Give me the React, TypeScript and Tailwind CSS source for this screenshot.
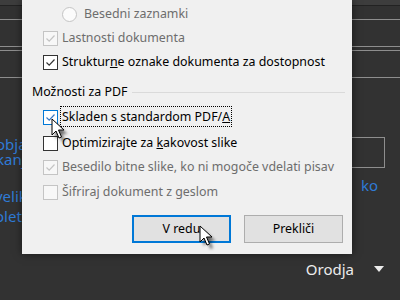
import React from "react";

const font = { fontFamily: '"Segoe UI", "Noto Sans", "Open Sans", sans-serif' };

function Check({ state }: { state: "on" | "off" | "dis-on" | "dis-off" | "hover-on" }) {
  const disabled = state.startsWith("dis");
  const checked = state === "on" || state === "dis-on" || state === "hover-on";
  const border =
    state === "hover-on" ? "border-[#0078d7]" : disabled ? "border-[#c4c4c4]" : "border-[#333333]";
  const bg = disabled ? "bg-[#f7f7f7]" : "bg-white";
  const stroke = state === "hover-on" ? "#3b78c4" : disabled ? "#c4c4c4" : "#333333";
  return (
    <div className={`w-[15px] h-[15px] border ${border} ${bg} flex items-center justify-center shrink-0`}>
      {checked && (
        <svg width="11" height="11" viewBox="0 0 11 11">
          <path d="M1.5 5.5 L4.2 8.2 L9.5 2.5" fill="none" stroke={stroke} strokeWidth="1.2" />
        </svg>
      )}
    </div>
  );
}

function Row({
  state,
  children,
  gray,
  className = "",
}: {
  state: "on" | "off" | "dis-on" | "dis-off" | "hover-on";
  children: React.ReactNode;
  gray?: boolean;
  className?: string;
}) {
  return (
    <div className={`flex items-center h-[24px] pl-[21px] ${className}`}>
      <Check state={state} />
      <div className={`ml-[4px] text-[12.4px] leading-[16px] ${gray ? "text-[#6d6d6d]" : "text-[#000000]"}`}>
        {children}
      </div>
    </div>
  );
}

function Cursor({ className }: { className: string }) {
  return (
    <svg className={className} width="20" height="26" viewBox="0 0 20 26" style={{ overflow: "visible" }}>
      <defs>
        <filter id="sh" x="-50%" y="-50%" width="200%" height="200%">
          <feGaussianBlur stdDeviation="1.6" />
        </filter>
      </defs>
      <path
        d="M3 3 L3 19 L7 15 L10 22 L12.5 21 L9.5 14 L15 14 Z"
        fill="rgba(0,0,0,0.55)"
        filter="url(#sh)"
        transform="translate(1.5,2)"
      />
      <path
        d="M1 1 L1 17 L5 13 L8 20 L10.5 19 L7.5 12 L13 12 Z"
        fill="white"
        stroke="black"
        strokeWidth="1"
        strokeLinejoin="miter"
      />
    </svg>
  );
}

export default function App() {
  return (
    <div className="relative w-[400px] h-[300px] overflow-hidden bg-[#323232]" style={font}>
      {/* background app */}
      <div className="flex flex-col">
        <div className="h-[5px] bg-[#3d3d3d]" />
        <div className="h-[1px] bg-[#222222]" />
        <div className="h-[13px]" />
        <div className="h-[1px] bg-[#8e8e8e]" />
        <div className="h-[26px]" />
        <div className="h-[1px] bg-[#8e8e8e]" />
        <div className="h-[3px]" />
        <div className="h-[1px] bg-[#8e8e8e]" />
        <div className="h-[26px]" />
        <div className="h-[1px] bg-[#8e8e8e]" />
        <div className="h-[59px]" />
        <div className="flex">
          <div className="ml-[-4px] flex flex-col text-[15px] leading-[15px] text-[#2f7bd6]">
            <span>objava</span>
            <span>kanje</span>
          </div>
          <div className="ml-auto mr-[15px] w-[85px] h-[31px] border border-[#8e8e8e]" />
        </div>
        <div className="flex items-start">
          <div className="ml-[-5px] flex flex-col text-[15px] leading-[20px] text-[#2f7bd6] mt-[18px]">
            <span>veliko</span>
            <span>oleti</span>
          </div>
          <div className="ml-auto mr-[22px] text-[15px] leading-[20px] text-[#2f7bd6] mt-[7px]">ko</div>
        </div>
        <div className="flex items-center justify-end mt-[33px] pr-[16px]">
          <span className="text-[15px] leading-[20px] text-[#ececec]">Orodja</span>
          <svg className="ml-[20px]" width="10" height="6" viewBox="0 0 10 6">
            <path d="M0 0 L10 0 L5 6 Z" fill="#ececec" />
          </svg>
        </div>
      </div>

      {/* dialog */}
      <div className="absolute left-[22px] top-0 w-[330px] h-[254px] bg-[#f0f0f0] shadow-[0_0_8px_rgba(0,0,0,0.5)] flex flex-col">
        <div className="flex items-center h-[24px] mt-[2px] pl-[40px]">
          <div className="w-[15px] h-[15px] rounded-full border border-[#c4c4c4] bg-[#fbfbfb]" />
          <span className="ml-[7px] text-[12.4px] leading-[16px] text-[#6d6d6d]">Besedni zaznamki</span>
        </div>
        <Row state="dis-on" gray>
          Lastnosti dokumenta
        </Row>
        <Row state="on">
          Struktur<span className="underline">n</span>e oznake dokumenta za dostopnost
        </Row>
        <div className="flex items-center h-[24px] mt-[6px] pl-[10px] pr-[7px]">
          <span className="text-[12.4px] leading-[16px] text-black">Možnosti za PDF</span>
          <div className="flex-1 h-[1px] bg-[#dadada] ml-[5px]" />
        </div>
        <Row state="hover-on" className="mt-[1px]">
          <span className="border border-dotted border-black px-[1px] py-[1px] ml-[-2px]">
            Skladen s standardom PDF/<span className="underline">A</span>
          </span>
        </Row>
        <Row state="off" className="mt-[2px]">
          Optimizirajte za <span className="underline">k</span>akovost slike
        </Row>
        <Row state="dis-on" gray>
          Besedilo bitne slike, ko ni mogoče vdelati pisav
        </Row>
        <Row state="dis-off" gray className="mt-[1px]">
          Šifriraj dokument z geslom
        </Row>
        <div className="flex justify-end gap-[13px] pr-[9px] mt-[11px]">
          <button className="w-[99px] h-[28px] border-2 border-[#0078d7] bg-[#e1e1e1] text-[12.4px] text-black">
            V redu
          </button>
          <button className="w-[99px] h-[28px] border border-[#adadad] bg-[#e1e1e1] text-[12.4px] text-black">
            Prekliči
          </button>
        </div>
      </div>

      <Cursor className="absolute left-[199px] top-[225px]" />
      <Cursor className="absolute left-[51px] top-[118px]" />
    </div>
  );
}
